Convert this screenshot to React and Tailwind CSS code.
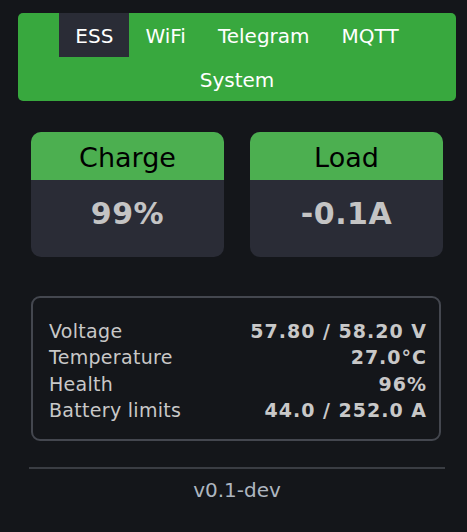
import React from "react";

const tabs = ["ESS", "WiFi", "Telegram", "MQTT", "System"];

const stats = [
  { label: "Voltage", value: "57.80 / 58.20 V" },
  { label: "Temperature", value: "27.0°C" },
  { label: "Health", value: "96%" },
  { label: "Battery limits", value: "44.0 / 252.0 A" },
];

function Card({ title, value }) {
  return (
    <div className="w-[193px] rounded-[10px] overflow-hidden bg-[#2a2c36]">
      <div className="h-[48px] bg-[#4caf50] text-black text-[27px] leading-[52px] text-center">
        {title}
      </div>
      <div className="h-[77px] pt-[15px] text-center text-[30px] leading-[38px] font-bold tracking-[0.5px] text-[#c4c4c4]">
        {value}
      </div>
    </div>
  );
}

export default function App() {
  return (
    <div className="min-h-screen bg-[#14161a] pt-[13px] pl-[18px] font-['DejaVu_Sans',sans-serif]">
      <nav className="w-[438px] h-[88px] rounded-[5px] bg-[#38a83e] flex flex-wrap justify-center">
        {tabs.map((t) => (
          <div
            key={t}
            className={
              "h-[44px] px-4 text-[20px] leading-[47px] text-white " +
              (t === "ESS" ? "bg-[#2a2c36]" : "")
            }
          >
            {t}
          </div>
        ))}
      </nav>

      <div className="mt-[31px] ml-[13px] flex gap-[26px]">
        <Card title="Charge" value="99%" />
        <Card title="Load" value="-0.1A" />
      </div>

      <div className="mt-[39px] ml-[13px] w-[410px] h-[145px] rounded-[9px] border-2 border-[#44474f] pt-[20px] pl-4 pr-[12px] text-[19px] leading-[26.3px] text-[#c8c8c8]">
        {stats.map((s) => (
          <div key={s.label} className="flex justify-between">
            <span className="tracking-[0.3px]">{s.label}</span>
            <span className="font-bold tracking-[1px]">{s.value}</span>
          </div>
        ))}
      </div>

      <div className="mt-[26px] ml-[11px] w-[416px] border-t-2 border-[#3a3d43]">
        <div className="pt-[9px] text-center text-[20px] leading-[24px] text-[#aeb6c0]">
          v0.1-dev
        </div>
      </div>
    </div>
  );
}
